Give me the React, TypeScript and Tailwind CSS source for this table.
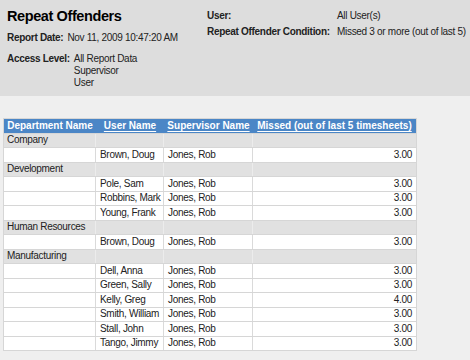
import type { ReactNode } from "react";

// Repeat offenders report: grey criteria panel on top, grouped grid below.

type Row =
  | { kind: "group"; name: string }
  | { kind: "user"; user: string; supervisor: string; missed: string };

const rows: Row[] = [
  { kind: "group", name: "Company" },
  { kind: "user", user: "Brown, Doug", supervisor: "Jones, Rob", missed: "3.00" },
  { kind: "group", name: "Development" },
  { kind: "user", user: "Pole, Sam", supervisor: "Jones, Rob", missed: "3.00" },
  { kind: "user", user: "Robbins, Mark", supervisor: "Jones, Rob", missed: "3.00" },
  { kind: "user", user: "Young, Frank", supervisor: "Jones, Rob", missed: "3.00" },
  { kind: "group", name: "Human Resources" },
  { kind: "user", user: "Brown, Doug", supervisor: "Jones, Rob", missed: "3.00" },
  { kind: "group", name: "Manufacturing" },
  { kind: "user", user: "Dell, Anna", supervisor: "Jones, Rob", missed: "3.00" },
  { kind: "user", user: "Green, Sally", supervisor: "Jones, Rob", missed: "3.00" },
  { kind: "user", user: "Kelly, Greg", supervisor: "Jones, Rob", missed: "4.00" },
  { kind: "user", user: "Smith, William", supervisor: "Jones, Rob", missed: "3.00" },
  { kind: "user", user: "Stall, John", supervisor: "Jones, Rob", missed: "3.00" },
  { kind: "user", user: "Tango, Jimmy", supervisor: "Jones, Rob", missed: "3.00" },
];

function Head({ children, link }: { children: ReactNode; link?: boolean }) {
  return (
    <div
      className={`flex h-[13.5px] items-center justify-center whitespace-nowrap bg-[#4b86c6] text-[10px] font-bold leading-none text-white ${
        link ? "underline underline-offset-[1.5px]" : ""
      }`}
    >
      {children}
    </div>
  );
}

function Cell({
  children,
  group,
  right,
  pad = "pl-[3px]",
}: {
  children?: ReactNode;
  group?: boolean;
  right?: boolean;
  pad?: string;
}) {
  return (
    <div
      className={`flex h-[13.5px] items-center whitespace-nowrap text-[10px] leading-none tracking-[-0.3px] text-[#222] ${
        group ? "bg-[#e1e1e1]" : "bg-white"
      } ${right ? "justify-end pr-[4px]" : pad}`}
    >
      {children}
    </div>
  );
}

export default function App() {
  return (
    <div
      className="min-h-screen bg-[#efefef]"
      style={{ fontFamily: '"Liberation Sans", Arial, sans-serif' }}
    >
      <div className="flex h-[96px] bg-[#dddddd] pl-[7px] text-[10px] tracking-[-0.3px] text-[#222]">
        <div className="w-[200px]">
          <h1 className="mt-[7.5px] h-[16px] text-[14.5px] font-bold leading-[16px] tracking-[-0.4px] text-black">
            Repeat Offenders
          </h1>
          <div className="mt-[8.5px] flex h-[12px] items-center gap-[4px] leading-[12px]">
            <span className="font-bold">Report Date:</span>
            <span>Nov 11, 2009 10:47:20 AM</span>
          </div>
          <div className="mt-[9px] flex gap-[4px] leading-[12px]">
            <span className="font-bold">Access Level:</span>
            <div className="flex flex-col">
              <span>All Report Data</span>
              <span>Supervisor</span>
              <span>User</span>
            </div>
          </div>
        </div>
        <div className="grid grid-cols-[130px_1fr] gap-y-[4px] self-start pt-[10px] leading-[12px]">
          <span className="font-bold">User:</span>
          <span>All User(s)</span>
          <span className="whitespace-nowrap font-bold">Repeat Offender Condition:</span>
          <span className="whitespace-nowrap">Missed 3 or more (out of last 5)</span>
        </div>
      </div>

      <div className="ml-[3px] mt-[22px] grid w-[414px] grid-cols-[91px_67px_88px_163px] gap-y-px bg-[#d6d6d6] p-px">
        <div className="col-span-4 grid grid-cols-[92px_68px_89px_163px] bg-[#4b86c6]">
          <Head>Department Name</Head>
          <Head link>User Name</Head>
          <Head link>Supervisor Name</Head>
          <Head link>Missed (out of last 5 timesheets)</Head>
        </div>
        {rows.map((r, i) =>
          r.kind === "group" ? (
            <div key={i} className="col-span-4 grid grid-cols-[91px_67px_88px_163px] gap-x-px bg-[#ececec]">
              <Cell group>{r.name}</Cell>
              <Cell group />
              <Cell group />
              <Cell group />
            </div>
          ) : (
            <div key={i} className="col-span-4 grid grid-cols-[91px_67px_88px_163px] gap-x-px bg-[#dadada]">
              <Cell />
              <Cell pad="pl-[4px]">{r.user}</Cell>
              <Cell pad="pl-[4px]">{r.supervisor}</Cell>
              <Cell right>{r.missed}</Cell>
            </div>
          )
        )}
      </div>
    </div>
  );
}
